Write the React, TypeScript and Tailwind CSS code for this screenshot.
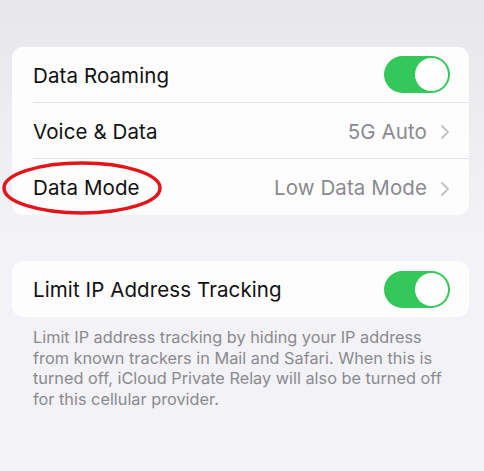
function Toggle() {
  return (
    <div className="w-[66px] h-[37px] rounded-full bg-[#34c759] flex items-center justify-end px-[2px]">
      <div className="w-[33px] h-[33px] rounded-full bg-white" />
    </div>
  );
}

function Chevron() {
  return (
    <svg width="10" height="16" viewBox="0 0 10 16" className="text-[#c4c4c7]">
      <path d="M2 2 L8 8 L2 14" fill="none" stroke="currentColor" strokeWidth="2" strokeLinecap="round" strokeLinejoin="round" />
    </svg>
  );
}

function Row({ label, value, toggle, last }: { label: string; value?: string; toggle?: boolean; last?: boolean }) {
  return (
    <div className="pl-[21px]">
      <div className={`h-[56px] flex items-center justify-between pr-[19px] pt-[3px] ${last ? "" : "border-b border-[#e4e4e8]"}`}>
        <span className="text-[20.5px] text-[#111111] tracking-[0.1px]">{label}</span>
        {toggle ? (
          <div className="-mt-[3px]">
            <Toggle />
          </div>
        ) : (
          <div className="flex items-center gap-[13px] text-[#8a8a8e]">
            <span className="text-[20.5px] tracking-[0.1px]">{value}</span>
            <Chevron />
          </div>
        )}
      </div>
    </div>
  );
}

export default function App() {
  return (
    <div
      className="relative w-[484px] h-[471px] overflow-hidden bg-gradient-to-b from-[#e6e6eb] via-[#f2f2f7] to-[#f2f2f7] pl-[12px] pr-[15px] pt-[47px]"
      style={{ fontFamily: "Inter, 'Noto Sans', sans-serif" }}
    >
      <div className="bg-[#fdfdfe] rounded-[11px] overflow-hidden">
        <Row label="Data Roaming" toggle />
        <Row label="Voice & Data" value="5G Auto" />
        <Row label="Data Mode" value="Low Data Mode" last />
      </div>

      <div className="mt-[46px] bg-[#fdfdfe] rounded-[11px] overflow-hidden">
        <Row label="Limit IP Address Tracking" toggle last />
      </div>

      <p className="mt-[10px] pl-[21px] pr-[14px] text-[16.3px] leading-[20.5px] text-[#8a8a8e]">
        Limit IP address tracking by hiding your IP address from known trackers in Mail and Safari. When this is turned off, iCloud Private Relay will also be turned off for this cellular provider.
      </p>

      {/* red annotation circle */}
      <svg className="absolute left-0 top-[160px] pointer-events-none" width="170" height="60" viewBox="0 0 170 60">
        <ellipse cx="82" cy="28" rx="78" ry="25" fill="none" stroke="#e3151b" strokeWidth="3.5" />
      </svg>
    </div>
  );
}
